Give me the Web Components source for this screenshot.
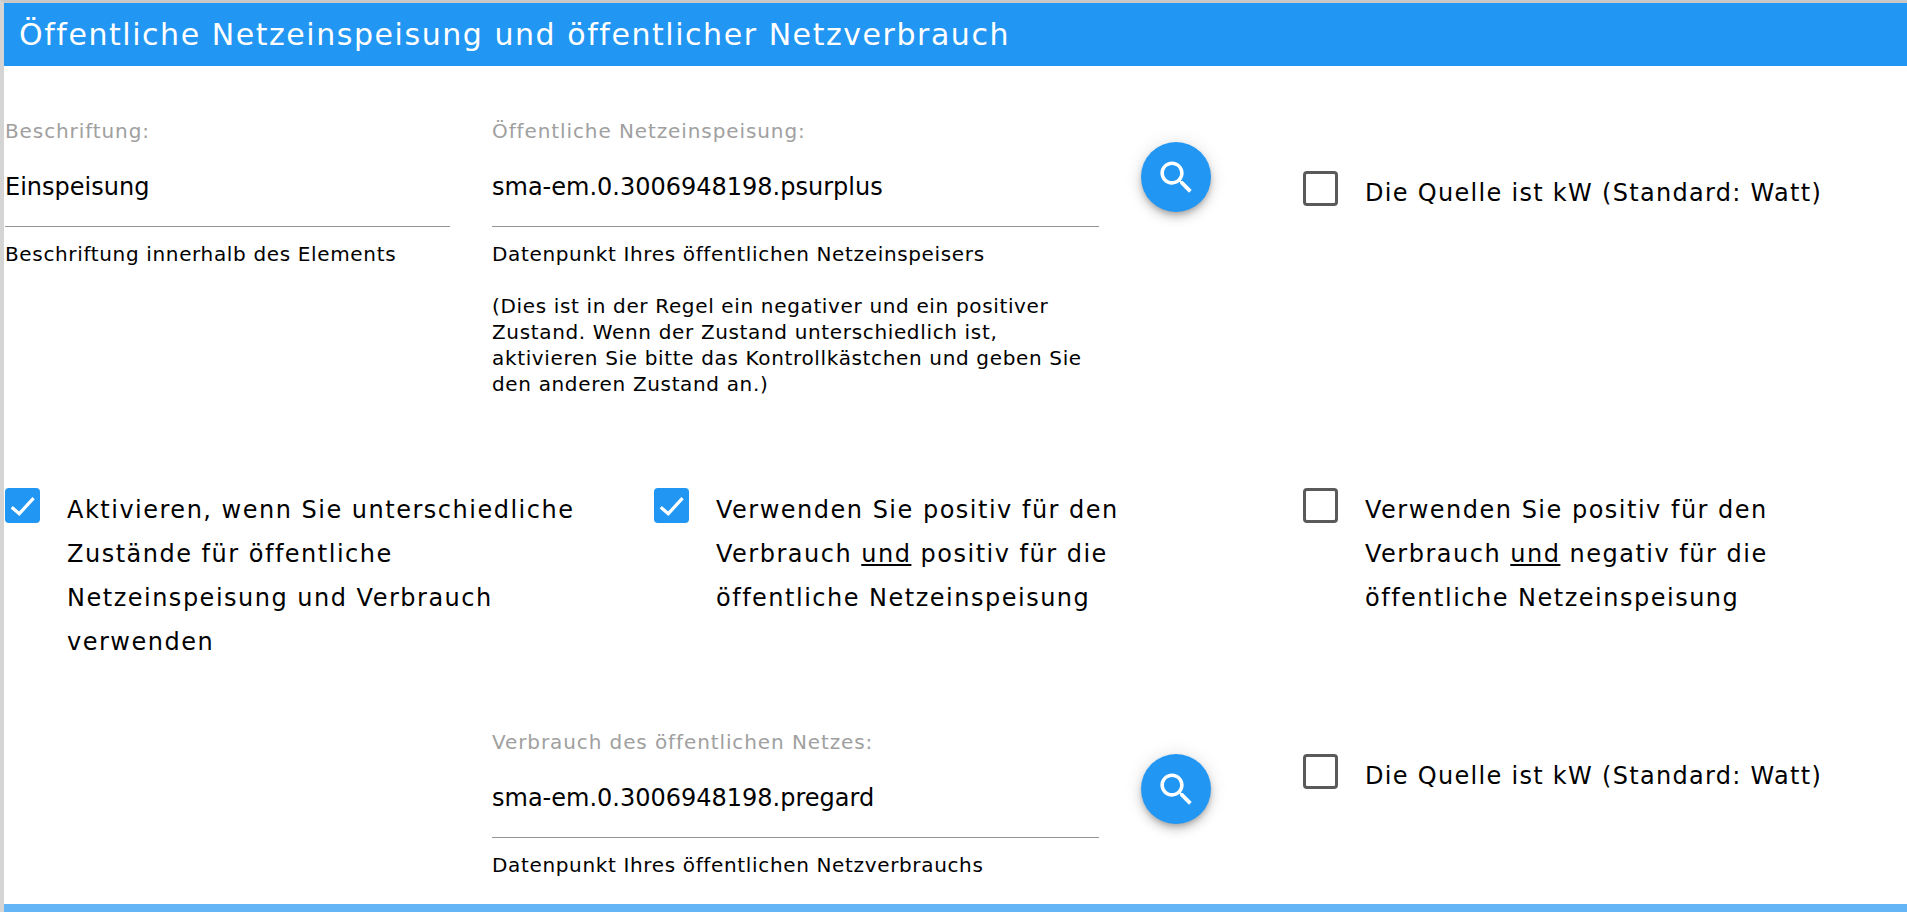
<!DOCTYPE html>
<html lang="de">
<head>
<meta charset="utf-8">
<title>Netzeinspeisung</title>
<style>
  html, body { margin: 0; height: 100%; overflow: hidden; background: #fff; }
  body { font-family: "DejaVu Sans", sans-serif; color: #000; }
  check-box.short { letter-spacing: 1.3px; }
</style>
</head>
<body>
<settings-panel title="Öffentliche Netzeinspeisung und öffentlicher Netzverbrauch">
  <div slot="row-1" style="display: contents">
    <text-field label="Beschriftung:" value="Einspeisung" style="width: 445px; margin-right: 42px">
      Beschriftung innerhalb des Elements
    </text-field>
    <text-field label="Öffentliche Netzeinspeisung:" value="sma-em.0.3006948198.psurplus" style="width: 607px; margin-right: 42px">
      Datenpunkt Ihres öffentlichen Netzeinspeisers<br><br>(Dies ist in der Regel ein negativer und ein positiver Zustand. Wenn der Zustand unterschiedlich ist, aktivieren Sie bitte das Kontrollkästchen und geben Sie den anderen Zustand an.)
    </text-field>
    <search-button style="margin-top: 76px; margin-right: 92px"></search-button>
    <check-box class="short" style="margin-top: 105px">Die Quelle ist kW (Standard: Watt)</check-box>
  </div>
  <div slot="row-2" style="display: contents">
    <check-box checked>Aktivieren, wenn Sie unterschiedliche Zustände für öffentliche Netzeinspeisung und Verbrauch verwenden</check-box>
    <check-box checked>Verwenden Sie positiv für den<br>Verbrauch <u>und</u> positiv für die<br>öffentliche Netzeinspeisung</check-box>
    <check-box>Verwenden Sie positiv für den<br>Verbrauch <u>und</u> negativ für die<br>öffentliche Netzeinspeisung</check-box>
  </div>
  <div slot="row-3" style="display: contents">
    <text-field label="Verbrauch des öffentlichen Netzes:" value="sma-em.0.3006948198.pregard" style="width: 607px; margin-left: 487px; margin-right: 42px">
      Datenpunkt Ihres öffentlichen Netzverbrauchs
    </text-field>
    <search-button style="margin-top: 77px; margin-right: 92px"></search-button>
    <check-box class="short" style="margin-top: 77px">Die Quelle ist kW (Standard: Watt)</check-box>
  </div>
</settings-panel>

<script>
class SettingsPanel extends HTMLElement {
  constructor() {
    super();
    this.attachShadow({ mode: "open" });
    this.shadowRoot.innerHTML = `
      <style>
        :host {
          display: flex;
          flex-direction: column;
          box-sizing: border-box;
          height: 912px;
          border-top: 3px solid #c9c9c9;
          border-left: 4px solid #d4d4d4;
          overflow: hidden;
        }
        .head {
          height: 63px;
          flex: none;
          display: flex;
          align-items: center;
          padding-left: 15px;
          background: #2196f3;
          color: #fff;
          font-size: 30px;
          letter-spacing: 1.55px;
        }
        .body { flex: 1; padding: 0 0 0 1px; }
        .row { display: flex; align-items: flex-start; }
        .r1 { height: 422px; box-sizing: border-box; }
        .r2 { display: grid; grid-template-columns: 649px 649px 1fr; height: 189px; box-sizing: border-box; }
        .r3 { height: 227px; }
        .foot { height: 8px; flex: none; background: #64b5f6; }
      </style>
      <div class="head">${this.getAttribute("title")}</div>
      <div class="body">
        <div class="row r1"><slot name="row-1"></slot></div>
        <div class="r2"><slot name="row-2"></slot></div>
        <div class="row r3"><slot name="row-3"></slot></div>
      </div>
      <div class="foot"></div>
    `;
  }
}

class TextField extends HTMLElement {
  constructor() {
    super();
    this.attachShadow({ mode: "open" });
    this.shadowRoot.innerHTML = `
      <style>
        :host { display: block; flex: none; box-sizing: border-box; }
        .label { height: 22px; margin-top: var(--top, 54px); font-size: 20px; line-height: 22px; letter-spacing: .9px; color: #a0a0a0; }
        .value { height: 85px; box-sizing: border-box; padding-top: 24px; font-size: 24px; line-height: 42px; border-bottom: 1px solid #949494; }
        .help { margin-top: 14px; font-size: 20px; line-height: 26px; letter-spacing: .65px; color: #000; }
      </style>
      <div class="label">${this.getAttribute("label")}</div>
      <div class="value">${this.getAttribute("value")}</div>
      <div class="help"><slot></slot></div>
    `;
  }
}

class CheckBox extends HTMLElement {
  constructor() {
    super();
    this.attachShadow({ mode: "open" });
    const on = this.hasAttribute("checked");
    this.shadowRoot.innerHTML = `
      <style>
        :host { display: flex; align-items: flex-start; gap: 27px; font-size: 24px; line-height: 44px; letter-spacing: 1.5px; }
        .box {
          flex: none; box-sizing: border-box; width: 35px; height: 35px;
          border-radius: 4px; border: 3px solid #5a5a5a; background: #fff;
        }
        .box.on { border: 0; background: #2196f3; }
        svg { display: block; width: 35px; height: 35px; }
        .text { width: 515px; }
      </style>
      <div class="box ${on ? "on" : ""}">${on ? `<svg viewBox="0 0 24 24"><path d="M4.6 13.2l5.2 4.4 9.8-10.6" fill="none" stroke="#fff" stroke-width="2.2"/></svg>` : ""}</div>
      <div class="text"><slot></slot></div>
    `;
  }
}

class SearchButton extends HTMLElement {
  constructor() {
    super();
    this.attachShadow({ mode: "open" });
    this.shadowRoot.innerHTML = `
      <style>
        :host {
          display: flex; flex: none; align-items: center; justify-content: center;
          width: 70px; height: 70px; border-radius: 50%; background: #2196f3;
          box-shadow: 0 3px 5px -1px rgba(0,0,0,.2), 0 6px 10px 0 rgba(0,0,0,.14), 0 1px 18px 0 rgba(0,0,0,.12);
        }
        svg { width: 43px; height: 43px; fill: #fff; }
      </style>
      <svg viewBox="0 0 24 24"><path d="M15.5 14h-.79l-.28-.27C15.41 12.59 16 11.11 16 9.5 16 5.91 13.09 3 9.5 3S3 5.91 3 9.5 5.91 16 9.5 16c1.61 0 3.09-.59 4.23-1.57l.27.28v.79l5 4.99L20.49 19l-4.99-5zm-6 0C7.01 14 5 11.99 5 9.5S7.01 5 9.5 5 14 7.01 14 9.5 11.99 14 9.5 14z"/></svg>
    `;
  }
}

customElements.define("settings-panel", SettingsPanel);
customElements.define("text-field", TextField);
customElements.define("check-box", CheckBox);
customElements.define("search-button", SearchButton);
</script>
</body>
</html>
